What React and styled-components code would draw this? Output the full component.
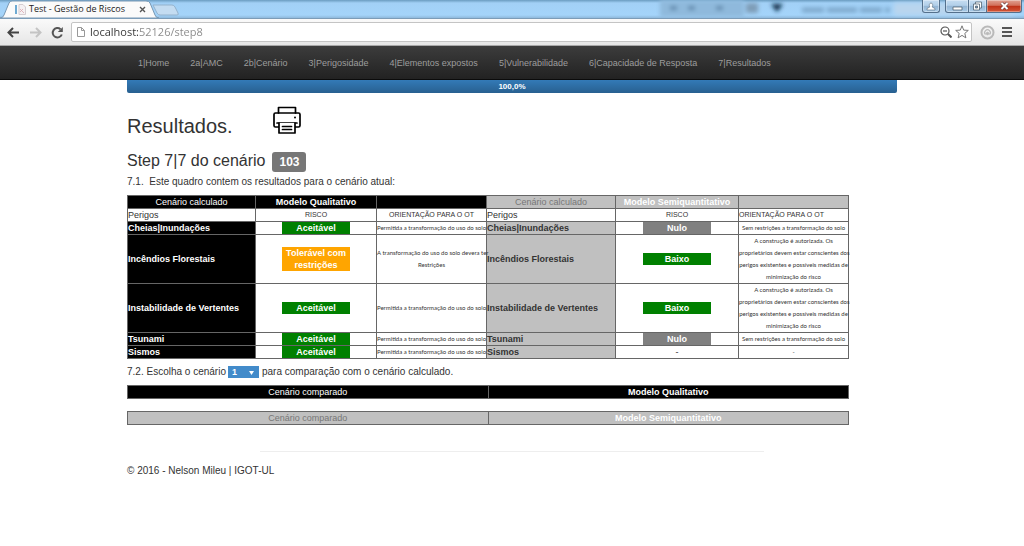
import React, { useState } from "react";
import styled, { createGlobalStyle } from "styled-components";

const GlobalStyle = createGlobalStyle`
  *, *::before, *::after { box-sizing: border-box; }
  body {
    margin: 0;
    background: #fff;
    color: #333;
    font: 10px/14px "Liberation Sans", Arial, sans-serif;
  }
  button, input, select { font: inherit; margin: 0; padding: 0; border: 0; background: none; }
`;

/* Browser window */

const TitleBar = styled.div`
  position: relative;
  display: flex;
  align-items: flex-end;
  height: 19px;
  overflow: hidden;
  border-bottom: 1px solid #7c9cb8;
  background: linear-gradient(#6a9cc0, #a2d0f6 3px, #a4d4fa 15px, #8fb9dc);
`;

const Glass = styled.svg`
  position: absolute;
  top: 0;
  right: 0;
`;

const TabShape = styled.svg`
  position: absolute;
  inset: 0 auto auto 0;
`;

const Tab = styled.div`
  position: relative;
  display: flex;
  align-items: center;
  width: 160px;
  height: 18px;
  padding: 0 13px 0 15px;
  color: #222;
  font: 9px/18px "Open Sans", "Noto Sans", sans-serif;
`;

const TabTitle = styled.span`
  position: relative;
  flex: 1;
  margin-left: 3px;
  white-space: nowrap;
`;

const IconButton = styled.button`
  position: relative;
  display: flex;
  flex: none;
  align-items: center;
  justify-content: center;
  width: ${(p) => p.$size || 16}px;
  height: ${(p) => p.$size || 16}px;
`;

const WindowControls = styled.div`
  position: absolute;
  top: 0;
  right: 2px;
  display: flex;
`;

const WindowButton = styled.button`
  display: flex;
  align-items: center;
  justify-content: center;
  width: ${(p) => p.$width}px;
  height: 13px;
  margin-right: ${(p) => p.$after || 0}px;
  border: 1px solid #54708c;
  border-top: 0;
  border-left-width: ${(p) => (p.$joined ? 0 : 1)}px;
  border-radius: ${(p) => p.$radius};
  box-shadow: inset 0 0 0 1px rgba(255, 255, 255, 0.35);
  background: ${(p) =>
    p.$close
      ? "linear-gradient(#e0a293, #d2705a 45%, #bd3016 50%, #d4583a)"
      : "linear-gradient(#c6ddf2, #b2cfe9 45%, #94b5d4 50%, #a9cbe9)"};
`;

const Toolbar = styled.div`
  display: flex;
  align-items: center;
  height: 27px;
  padding: 0 5px 0 4px;
  border-bottom: 1px solid #a8a8a8;
  background: linear-gradient(#fafafa, #e6e6e6);
`;

const NavButtons = styled.div`
  display: flex;
  gap: 3px;
  margin-right: 4px;
`;

const AddressBar = styled.div`
  display: flex;
  flex: 1;
  align-items: center;
  height: 20px;
  margin-right: 7px;
  padding: 0 1px 0 4px;
  border: 1px solid #c4c4c4;
  border-radius: 2px;
  background: #fff;
`;

const AddressInput = styled.input`
  flex: 1;
  min-width: 0;
  height: 18px;
  margin-left: 4px;
  outline: 0;
  color: transparent;
  background: linear-gradient(90deg, #333 50px, #888 50px);
  background-clip: text;
  font: 11px/18px "Open Sans", "Noto Sans", sans-serif;
`;

/* Site */

const SiteNav = styled.nav`
  height: 34px;
  border-bottom: 1px solid #0b0b0b;
  background: linear-gradient(#3c3c3c, #222);
`;

const Container = styled.div`
  width: 100%;
  max-width: 770px;
  margin: 0 auto;
`;

const NavList = styled.ul`
  display: flex;
  gap: 21px;
  margin: 0;
  padding: 0 11px;
  list-style: none;
`;

const NavLink = styled.a`
  color: #9d9d9d;
  font-size: 9px;
  line-height: 34px;
  text-decoration: none;
  white-space: nowrap;
`;

const Progress = styled.div`
  height: 13px;
  border-radius: 0 0 2px 2px;
  background: linear-gradient(#337ab7, #286090);
  color: #fff;
  font-size: 8px;
  font-weight: bold;
  line-height: 13px;
  text-align: center;
`;

const TitleRow = styled.div`
  display: flex;
  align-items: flex-end;
  justify-content: flex-start;
  gap: 40px;
  height: 32px;
  margin-top: 13px;
`;

const PageTitle = styled.h2`
  margin: 0;
  font-size: 20px;
  font-weight: normal;
  line-height: 24px;
`;

const PrintButton = styled.button`
  display: block;
  align-self: flex-start;
  width: 28px;
  height: 28px;
`;

const StepTitle = styled.h3`
  display: flex;
  gap: 7px;
  margin: 14px 0 0;
  font-size: 16px;
  font-weight: normal;
  line-height: 18px;
`;

const ScenarioBadge = styled.span`
  width: 34px;
  height: 20px;
  border-radius: 3px;
  background: #777;
  color: #fff;
  font-size: 12px;
  font-weight: bold;
  line-height: 20px;
  text-align: center;
`;

const Intro = styled.p`
  margin: 3px 0 6px;
  white-space: pre-wrap;
`;

const Choice = styled.div`
  display: flex;
  align-items: center;
  margin: 6px 0;
`;

const SelectWrap = styled.span`
  position: relative;
  display: flex;
  margin: 0 3px 0 2px;
`;

const ScenarioSelect = styled.select`
  appearance: none;
  width: 31px;
  height: 12px;
  padding: 0 4px;
  background: #428bca;
  color: #fff;
  font-size: 9px;
  font-weight: bold;
  line-height: 12px;
`;

const SelectArrow = styled.svg`
  position: absolute;
  top: 5px;
  right: 5px;
  pointer-events: none;
`;

const Table = styled.table`
  width: 100%;
  max-width: 722px;
  margin-bottom: ${(p) => p.$after || 0}px;
  border: 1px solid #333;
  border-collapse: collapse;
  table-layout: fixed;
  font-size: 9px;
  line-height: 12px;
`;

const Col = styled.col`
  width: ${(p) => p.$width};
`;

const Cell = styled.td`
  height: 13px;
  padding: 0;
  border: 1px solid #666;
  text-align: ${(p) => p.$align || "center"};
  white-space: nowrap;
`;

const HeadCell = styled(Cell).attrs({ as: "th", scope: "col" })`
  background: ${(p) => (p.$silver ? "silver" : "#000")};
  color: ${(p) => (p.$muted ? "#777" : "#fff")};
  font-weight: ${(p) => (p.$strong ? "bold" : "normal")};
`;

const HazardCell = styled(Cell).attrs({ as: "th", scope: "row", $align: "left" })`
  background: ${(p) => (p.$silver ? "silver" : "#000")};
  color: ${(p) => (p.$silver ? "#333" : "#fff")};
`;

const LabelCell = styled(Cell)`
  font-size: ${(p) => (p.$caps ? 7 : 9)}px;
`;

const NoteCell = styled(Cell)`
  font-family: Lato, "Liberation Sans", sans-serif;
  font-size: 6px;
`;

const NoteLine = styled.span`
  display: block;
`;

const levelColors = { green: "green", orange: "orange", gray: "gray" };

const Level = styled.span`
  display: block;
  width: 68px;
  margin: 0 auto;
  background: ${(p) => levelColors[p.$level]};
  color: #fff;
  font-weight: bold;
  white-space: normal;
`;

const Divider = styled.hr`
  width: 66%;
  max-width: 504px;
  margin: 26px auto 12px;
  border: 0;
  border-top: 1px solid #eee;
`;

const Footer = styled.footer`
  margin: 0;
`;

const links = [
  "1|Home",
  "2a|AMC",
  "2b|Cenário",
  "3|Perigosidade",
  "4|Elementos expostos",
  "5|Vulnerabilidade",
  "6|Capacidade de Resposta",
  "7|Resultados",
];

const allowed = ["Permitida a transformação do uso do solo"];
const unrestricted = ["Sem restrições a transformação do solo"];
const authorised = [
  "A construção é autorizada. Os",
  "proprietários devem estar conscientes dos",
  "perigos existentes e possíveis medidas de",
  "minimização do risco",
];

const rows = [
  { hazard: "Cheias|Inundações", a: ["Aceitável", "green", allowed], b: ["Nulo", "gray", unrestricted] },
  {
    hazard: "Incêndios Florestais",
    a: ["Tolerável com restrições", "orange", ["A transformação do uso do solo devera ter", "Restrições"]],
    b: ["Baixo", "green", authorised],
  },
  { hazard: "Instabilidade de Vertentes", a: ["Aceitável", "green", allowed], b: ["Baixo", "green", authorised] },
  { hazard: "Tsunami", a: ["Aceitável", "green", allowed], b: ["Nulo", "gray", unrestricted] },
  { hazard: "Sismos", a: ["Aceitável", "green", allowed], b: ["-", null, ["-"]] },
];

function Result({ value: [label, level, note] }) {
  return (
    <>
      <Cell>{level ? <Level $level={level}>{label}</Level> : label}</Cell>
      <NoteCell>
        {note.map((line) => (
          <NoteLine key={line}>{line}</NoteLine>
        ))}
      </NoteCell>
    </>
  );
}

function ResultsTable() {
  return (
    <Table>
      <colgroup>
        {["128px", "121px", "110px", "129px", "123px", "110px"].map((w, i) => (
          <Col key={i} $width={w} />
        ))}
      </colgroup>
      <thead>
        <tr>
          <HeadCell>Cenário calculado</HeadCell>
          <HeadCell $strong>Modelo Qualitativo</HeadCell>
          <HeadCell />
          <HeadCell $silver $muted>Cenário calculado</HeadCell>
          <HeadCell $silver $strong>Modelo Semiquantitativo</HeadCell>
          <HeadCell $silver />
        </tr>
      </thead>
      <tbody>
        <tr>
          <LabelCell $align="left">Perigos</LabelCell>
          <LabelCell $caps>RISCO</LabelCell>
          <LabelCell $caps>ORIENTAÇÃO PARA O OT</LabelCell>
          <LabelCell $align="left">Perigos</LabelCell>
          <LabelCell $caps>RISCO</LabelCell>
          <LabelCell $caps $align="left">ORIENTAÇÃO PARA O OT</LabelCell>
        </tr>
        {rows.map((row) => (
          <tr key={row.hazard}>
            <HazardCell>{row.hazard}</HazardCell>
            <Result value={row.a} />
            <HazardCell $silver>{row.hazard}</HazardCell>
            <Result value={row.b} />
          </tr>
        ))}
      </tbody>
    </Table>
  );
}

function ComparisonTable({ model, silver, after }) {
  return (
    <Table $after={after}>
      <thead>
        <tr>
          <HeadCell $silver={silver} $muted={silver}>Cenário comparado</HeadCell>
          <HeadCell $silver={silver} $strong>{model}</HeadCell>
        </tr>
      </thead>
    </Table>
  );
}

function BrowserChrome() {
  const [url, setUrl] = useState("localhost:52126/step8");
  return (
    <header>
      <TitleBar>
        <Glass width="400" height="18" aria-hidden="true">
          <defs>
            <filter id="soft" x="-20%" y="-50%" width="140%" height="200%">
              <feGaussianBlur stdDeviation="2" />
            </filter>
          </defs>
          <g filter="url(#soft)">
            <rect x="36" y="0" width="84" height="17" fill="#8fb9dc" />
            <rect x="46" y="6" width="7" height="4" fill="#5f88ab" />
            <rect x="64" y="6" width="7" height="4" fill="#5f88ab" />
            <rect x="92" y="6" width="7" height="4" fill="#5f88ab" />
            <rect x="122" y="3" width="12" height="10" fill="#7f9db8" />
            <path d="M147 4h12l-6 8z" fill="#102a44" />
            <rect x="270" y="3" width="120" height="12" fill="#b9d5ee" />
            <path d="M178 10h88" stroke="#7da7cb" strokeWidth="5" strokeDasharray="22 3 30 3" />
          </g>
        </Glass>
        <TabShape width="184" height="18" aria-hidden="true">
          <path d="M153 5h19q2 0 3 2l3 6q1 2-1 2h-17q-2 0-3-2z" fill="#c4dcf1" stroke="#94b2cc" />
          <path d="M0 18q3 0 4-3L9 3q1-2 3-2h134q3 0 4 2l5 12q1 3 4 3z" fill="#fafafa" stroke="#7898b4" />
        </TabShape>
        <Tab>
          <svg width="11" height="11" viewBox="0 0 11 11" aria-hidden="true">
            <path d="M1 1v9" stroke="#3f8fc4" strokeWidth="1.5" />
            <path d="M4 .5h4l2.500 2.500v7.500H4z" fill="#f5f1f3" stroke="#d5cdd1" />
            <path d="M5 5l4 4M5 8l3-3" stroke="#dba8ae" strokeWidth=".8" />
          </svg>
          <TabTitle>Test - Gestão de Riscos</TabTitle>
          <IconButton $size={9} aria-label="Close tab">
            <svg width="7" height="7" stroke="#555" strokeWidth="1.4">
              <path d="M1 1l5 5M6 1L1 6" />
            </svg>
          </IconButton>
        </Tab>
        <WindowControls>
          <WindowButton $width={18} $after={5} $radius="0 0 3px 3px" aria-label="User">
            <svg width="10" height="9" fill="#fff" stroke="#66788a" strokeWidth=".7">
              <path d="M1 8V6.500L3.800 5C2.800 3.500 3.300 1 5 1s2.200 2.500 1.200 4L9 6.500V8z" />
            </svg>
          </WindowButton>
          <WindowButton $width={24} $radius="0 0 0 3px" aria-label="Minimize">
            <svg width="11" height="9" fill="#fff" stroke="#536475" strokeWidth=".8">
              <path d="M1 5h9v3H1z" />
            </svg>
          </WindowButton>
          <WindowButton $width={18} $joined $radius="0" aria-label="Restore">
            <svg width="11" height="10" fill="#fff" stroke="#536475" strokeWidth=".8">
              <path d="M3.500 1h6v6h-6z" />
              <path d="M1.500 3h6v6h-6z" />
              <path d="M3.500 5h2v2h-2z" fill="#7896b4" />
            </svg>
          </WindowButton>
          <WindowButton $width={35} $joined $close $radius="0 0 3px 0" aria-label="Close">
            <svg width="11" height="10" fill="none">
              <path d="M2.500 2l6 6M8.500 2l-6 6" stroke="#6a3b3b" strokeWidth="3.200" />
              <path d="M2.500 2l6 6M8.500 2l-6 6" stroke="#fff" strokeWidth="2" />
            </svg>
          </WindowButton>
        </WindowControls>
      </TitleBar>
      <Toolbar>
        <NavButtons>
          <IconButton $size={19} aria-label="Back">
            <svg width="13" height="11" fill="none" stroke="#444" strokeWidth="2">
              <path d="M12 5.500H2M6 1L1.500 5.500 6 10" />
            </svg>
          </IconButton>
          <IconButton $size={19} aria-label="Forward">
            <svg width="13" height="11" fill="none" stroke="#c4c4c4" strokeWidth="2">
              <path d="M1 5.500h10M7 1l4.500 4.500L7 10" />
            </svg>
          </IconButton>
          <IconButton $size={19} aria-label="Reload">
            <svg width="13" height="13" fill="none" stroke="#555" strokeWidth="2">
              <path d="M10.800 8.500A4.700 4.700 0 1 1 9.500 3.200" />
              <path d="M11.800 1v5h-5z" fill="#555" stroke="none" />
            </svg>
          </IconButton>
        </NavButtons>
        <AddressBar>
          <svg width="10" height="12" fill="#fff" stroke="#999" aria-hidden="true">
            <path d="M1.500 1.500h4l3 3v6h-7zM5.500 1.500v3h3" />
          </svg>
          <AddressInput
            aria-label="Address"
            spellCheck="false"
            value={url}
            onChange={(e) => setUrl(e.target.value)}
          />
          <IconButton aria-label="Zoom">
            <svg width="12" height="12" fill="none" stroke="#555" strokeWidth="1.200">
              <circle cx="5" cy="5" r="4" />
              <path d="M3 5h4" />
              <path d="M8 8l3.500 3.500" strokeWidth="2" />
            </svg>
          </IconButton>
          <IconButton aria-label="Bookmark">
            <svg width="14" height="14" viewBox="0 0 14 14" fill="#fff" stroke="#777">
              <path d="M7 .8l1.700 4.300 4.600.3-3.500 3 1.100 4.500L7 10.400l-3.900 2.500 1.100-4.500-3.500-3 4.600-.3z" />
            </svg>
          </IconButton>
        </AddressBar>
        <IconButton aria-label="Extension">
          <svg width="15" height="15" fill="none" stroke="#b9b9b9">
            <circle cx="7.500" cy="7.500" r="6" strokeWidth="2" />
            <path d="M5.500 9.500a2.800 2.800 0 1 1 4 0" strokeWidth="1.200" />
            <circle cx="7.500" cy="8.500" r="1.200" fill="#b9b9b9" />
          </svg>
        </IconButton>
        <IconButton $size={24} aria-label="Menu">
          <svg width="10" height="10" fill="#555">
            <path d="M0 0h10v2H0zM0 4h10v2H0zM0 8h10v2H0z" />
          </svg>
        </IconButton>
      </Toolbar>
    </header>
  );
}

export default function App() {
  return (
    <>
      <GlobalStyle />
      <BrowserChrome />
      <SiteNav>
        <Container>
          <NavList>
            {links.map((label) => (
              <li key={label}>
                <NavLink href="#">{label}</NavLink>
              </li>
            ))}
          </NavList>
        </Container>
      </SiteNav>
      <Container as="main">
        <Progress role="progressbar" aria-valuenow={100}>100,0%</Progress>
        <TitleRow>
          <PageTitle>Resultados.</PageTitle>
          <PrintButton aria-label="Imprimir">
            <svg width="28" height="28" fill="none" stroke="#000" strokeWidth="1.700" strokeLinejoin="round" strokeLinecap="round">
              <path d="M5.500 7V1.500h17V7" />
              <path d="M6 21H2.500Q1 21 1 19.500V8.500Q1 7 2.500 7h23Q27 7 27 8.500v11q0 1.500-1.500 1.500H22" />
              <path d="M4 17h20" />
              <path d="M6 17v10h16V17" fill="#fff" />
              <path d="M9.500 20.500h9M9.500 23.500h9" />
              <circle cx="22" cy="11.500" r="1" fill="#000" stroke="none" />
            </svg>
          </PrintButton>
        </TitleRow>
        <StepTitle>
          Step 7|7 do cenário <ScenarioBadge>103</ScenarioBadge>
        </StepTitle>
        <Intro>{"7.1.  Este quadro contem os resultados para o cenário atual:"}</Intro>
        <ResultsTable />
        <Choice>
          <label htmlFor="scenario">7.2. Escolha o cenário</label>
          <SelectWrap>
            <ScenarioSelect id="scenario" defaultValue="1">
              <option>1</option>
              <option>2</option>
            </ScenarioSelect>
            <SelectArrow width="5" height="4" fill="#fff" aria-hidden="true">
              <path d="M0 0h5L2.500 4z" />
            </SelectArrow>
          </SelectWrap>
          <span>para comparação com o cenário calculado.</span>
        </Choice>
        <ComparisonTable model="Modelo Qualitativo" after={12} />
        <ComparisonTable model="Modelo Semiquantitativo" silver />
        <Divider />
        <Footer>© 2016 - Nelson Mileu | IGOT-UL</Footer>
      </Container>
    </>
  );
}
